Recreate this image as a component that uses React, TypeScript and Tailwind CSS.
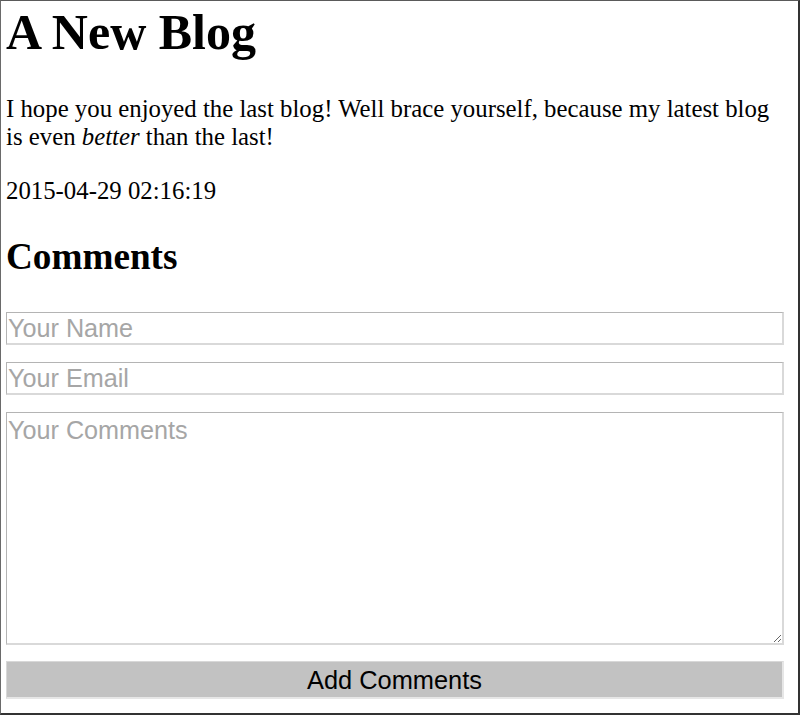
import React from "react";

export default function App() {
  return (
    <div className="w-[800px] h-[715px] bg-white border-t border-l border-r-2 border-b-2 border-t-[#5a5a5a] border-l-[#6a6a6a] border-r-[#333] border-b-[#333] overflow-hidden">
      <div className="pl-[5px] pr-[14px] pt-[3px]">
        <h1 className="m-0 text-[50px] leading-[56px] font-bold text-black font-['Liberation_Serif',serif]">
          A New Blog
        </h1>
        <p className="mt-[35px] text-[24.8px] leading-[28px] text-black font-['Liberation_Serif',serif]">
          I hope you enjoyed the last blog! Well brace yourself, because my latest blog is even <em>better</em> than the last!
        </p>
        <p className="mt-[26px] text-[24.8px] leading-[28px] text-black font-['Liberation_Serif',serif]">
          2015-04-29 02:16:19
        </p>
        <h2 className="mt-[31px] text-[37.2px] leading-[42px] font-bold text-black font-['Liberation_Serif',serif]">
          Comments
        </h2>
        <form className="mt-[34px] flex flex-col" onSubmit={(e) => e.preventDefault()}>
          <input
            type="text"
            placeholder="Your Name"
            className="block w-[778px] h-[33px] px-[1px] text-[25.2px] leading-[28px] font-['Liberation_Sans',Arial,sans-serif] text-black placeholder:text-[#a6a6a6] bg-white border-t border-l border-r-2 border-b-2 border-t-[#b4b4b4] border-l-[#b4b4b4] border-r-[#d9d9d9] border-b-[#d9d9d9] outline-none"
          />
          <input
            type="text"
            placeholder="Your Email"
            className="block mt-[17px] w-[778px] h-[33px] px-[1px] text-[25.2px] leading-[28px] font-['Liberation_Sans',Arial,sans-serif] text-black placeholder:text-[#a6a6a6] bg-white border-t border-l border-r-2 border-b-2 border-t-[#b4b4b4] border-l-[#b4b4b4] border-r-[#d9d9d9] border-b-[#d9d9d9] outline-none"
          />
          <textarea
            placeholder="Your Comments"
            className="block mt-[17px] w-[778px] h-[233px] px-[1px] pt-[3px] text-[25.2px] leading-[28px] font-['Liberation_Sans',Arial,sans-serif] text-black placeholder:text-[#a6a6a6] bg-white border-t border-l border-r-2 border-b-2 border-t-[#b4b4b4] border-l-[#b4b4b4] border-r-[#d9d9d9] border-b-[#d9d9d9] outline-none resize"
          />
          <button
            type="submit"
            className="block mt-[16px] w-[778px] h-[38px] bg-[#c2c2c2] text-black text-[25.4px] leading-[28px] font-['Liberation_Sans',Arial,sans-serif] border-t border-l border-r-2 border-b-2 border-t-[#d8d8d8] border-l-[#d8d8d8] border-r-[#e6e6e6] border-b-[#e6e6e6]"
          >
            Add Comments
          </button>
        </form>
      </div>
    </div>
  );
}
